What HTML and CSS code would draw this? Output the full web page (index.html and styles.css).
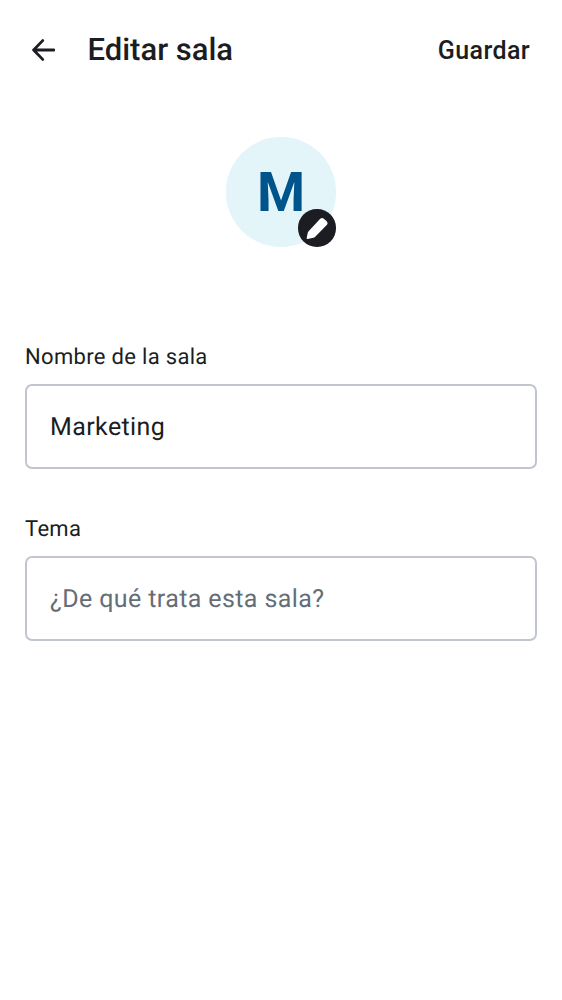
FILE: index.html
```html
<!DOCTYPE html>
<html lang="es">
<head>
<meta charset="utf-8">
<title>Editar sala</title>
<link rel="stylesheet" href="styles.css">
</head>
<body>
<header class="topbar">
  <button class="back" aria-label="Atrás">
    <svg width="24" height="24" viewBox="0 0 24 24" fill="none" stroke="currentColor" stroke-width="2.8" stroke-linecap="round" stroke-linejoin="round"><path d="M23 12H2.8M11.7 2.6L2.6 12L11.7 21.4"/></svg>
  </button>
  <h1 class="title">Editar sala</h1>
  <button class="save">Guardar</button>
</header>
<main class="content">
  <div class="avatar">
    <span class="initial">M</span>
    <span class="edit">
      <svg width="38" height="38" viewBox="0 0 38 38" fill="#fff"><path d="M8.7 29L9.8 23.6Q10 22.9 10.6 22.2L22.2 9.8Q23.9 8.2 25.6 9.5L28.9 12.4Q30.3 14 29 15.8L17.2 27.7Q16.4 28.5 15.4 28.7L9.6 29.9Q8.5 30 8.7 29Z"/></svg>
    </span>
  </div>
  <label class="field"><span class="label">Nombre de la sala</span><span class="box">Marketing</span></label>
  <label class="field"><span class="label">Tema</span><span class="box hint">¿De qué trata esta sala?</span></label>
</main>
</body>
</html>
```
FILE: styles.css
```css
* { box-sizing: border-box; }
body { margin: 0; background: #fff; color: #1b1d22; font-family: Roboto, sans-serif; text-rendering: geometricPrecision; }
button { border: 0; padding: 0; background: none; font: inherit; color: inherit; }
.topbar { display: flex; align-items: center; height: 100px; padding: 0 32px 0 31px; }
.back { display: flex; width: 24px; height: 24px; }
.title { margin: 0 0 0 32.5px; font-size: 31px; font-weight: 500; line-height: 40px; }
.save { margin-left: auto; padding-top: 1px; font-size: 25px; font-weight: 500; letter-spacing: .4px; }
.content { display: flex; flex-direction: column; padding: 37.4px 25px 0; }
.avatar { position: relative; display: flex; align-items: center; justify-content: center; align-self: center; width: 109.4px; height: 109.4px; margin-bottom: 94.2px; border-radius: 50%; background: #e3f5f8; }
.initial { padding-top: 2px; color: #00548c; font-size: 55px; font-weight: 700; line-height: 1; }
.edit { position: absolute; right: 0; bottom: 0; width: 37.5px; height: 37.5px; border-radius: 50%; background: #1b1d22; }
.edit svg { display: block; }
.field { display: flex; flex-direction: column; margin-bottom: 44px; }
.label { height: 43px; font-size: 22px; line-height: 33px; letter-spacing: .32px; }
.box { height: 85px; padding: 0 23px; border: 2px solid #c0c5cf; border-radius: 7px; font-size: 25px; line-height: 83px; letter-spacing: .39px; }
.hint { color: #656d77; }
```
